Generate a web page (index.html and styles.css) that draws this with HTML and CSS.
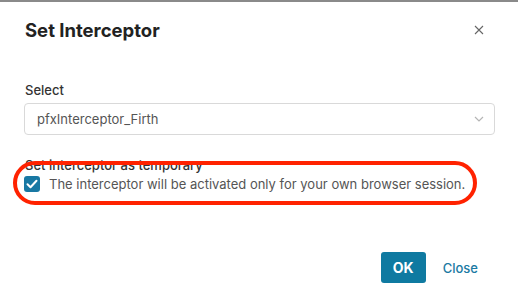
FILE: index.html
```html
<!DOCTYPE html>
<html>
<head>
<meta charset="utf-8">
<link rel="stylesheet" href="styles.css">
</head>
<body>
<div class="topbar"></div>
<div class="modal">
  <div class="header">
    <h1 class="title">Set Interceptor</h1>
    <svg class="close-x" width="10" height="10" viewBox="0 0 10 10"><path d="M1 1l8 8M9 1l-8 8" stroke="#666" stroke-width="1.1"/></svg>
  </div>
  <div class="body">
    <label class="field-label">Select</label>
    <div class="select">
      <span class="select-value">pfxInterceptor_Firth</span>
      <svg class="chevron" width="10" height="6" viewBox="0 0 10 6"><path d="M1 1l4 4 4-4" fill="none" stroke="#b5b5b5" stroke-width="1.2"/></svg>
    </div>
    <div class="temp-group">
      <label class="field-label">Set interceptor as temporary</label>
      <div class="check-row">
        <span class="checkbox"><svg width="12" height="10" viewBox="0 0 12 10"><path d="M1.5 5.2l3 3 6-6.5" fill="none" stroke="#fff" stroke-width="2" stroke-linecap="round" stroke-linejoin="round"/></svg></span>
        <span class="check-text">The interceptor will be activated only for your own browser session.</span>
      </div>
      <div class="highlight"></div>
    </div>
  </div>
  <div class="footer">
    <button class="btn-ok">OK</button>
    <button class="btn-close">Close</button>
  </div>
</div>
</body>
</html>
```

FILE: styles.css
```css
html, body {
  margin: 0;
  padding: 0;
  background: #fff;
  font-family: Inter, "Liberation Sans", sans-serif;
}
.topbar {
  height: 2px;
  background: #8a8a8a;
}
.modal {
  width: 518px;
  height: 306px;
  display: flex;
  flex-direction: column;
}
.header {
  display: flex;
  align-items: center;
  justify-content: space-between;
  padding: 16px 34px 0 25px;
  height: 24px;
}
.title {
  margin: 0;
  font-size: 18.5px;
  line-height: 24px;
  font-weight: 700;
  color: #222;
}
.body {
  padding: 0 23px 0 24px;
  margin-top: 40px;
}
.field-label {
  display: block;
  font-size: 13px;
  line-height: 16px;
  color: #333;
  font-weight: 500;
  padding-left: 1px;
  white-space: nowrap;
}
.select {
  margin-top: 5px;
  height: 30px;
  border: 1px solid #d9d9d9;
  border-radius: 4px;
  display: flex;
  align-items: center;
  justify-content: space-between;
  padding: 0 10px 0 12px;
}
.select-value {
  font-size: 13px;
  color: #555;
}
.temp-group {
  position: relative;
  margin-top: 22px;
}
.check-row {
  display: flex;
  align-items: center;
  margin-top: 3px;
  gap: 9px;
}
.checkbox {
  width: 16px;
  height: 16px;
  border-radius: 3px;
  background: #1878a3;
  display: flex;
  align-items: center;
  justify-content: center;
  flex: none;
}
.check-text {
  font-size: 13px;
  color: #555;
  white-space: nowrap;
}
.highlight {
  position: absolute;
  left: -11px;
  top: 4px;
  width: 456px;
  height: 36px;
  border: 4px solid #ff2200;
  border-radius: 22px;
}
.footer {
  margin-top: auto;
  display: flex;
  justify-content: flex-end;
  align-items: center;
  gap: 17px;
  padding: 0 40px 25px 0;
}
.btn-ok {
  width: 45px;
  height: 31px;
  border: none;
  border-radius: 3px;
  background: #0f7aa1;
  color: #fff;
  font-family: Inter, "Liberation Sans", sans-serif;
  font-weight: 700;
  font-size: 14px;
}
.btn-close {
  border: none;
  background: none;
  padding: 0;
  color: #1a7aa3;
  font-family: Inter, "Liberation Sans", sans-serif;
  font-size: 13px;
  font-weight: 500;
}
```
